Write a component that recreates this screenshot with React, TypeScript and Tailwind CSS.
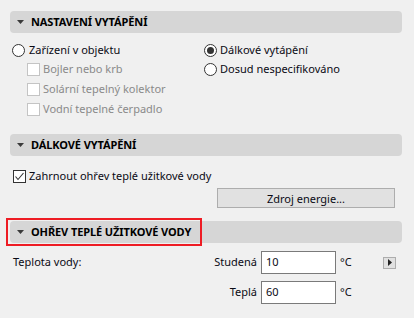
import React from "react";

const font = { fontFamily: '"Noto Sans", "Open Sans", sans-serif' };

function Header({ title }: { title: string }) {
  return (
    <div className="flex h-[22px] items-center rounded-[4px] bg-[#d6d6d6] pl-[7px]">
      <svg width="7" height="4" viewBox="0 0 7 4" className="mr-[7px]">
        <polygon points="0,0 7,0 3.5,4" fill="#3a3a3a" />
      </svg>
      <span className="text-[11px] font-bold tracking-[-0.1px] text-black">{title}</span>
    </div>
  );
}

function Radio({ checked }: { checked?: boolean }) {
  return (
    <span className="flex h-[13px] w-[13px] shrink-0 items-center justify-center rounded-full border border-[#333333] bg-white">
      {checked && <span className="h-[7px] w-[7px] rounded-full bg-[#333333]" />}
    </span>
  );
}

function Check({ checked, disabled }: { checked?: boolean; disabled?: boolean }) {
  return (
    <span
      className={
        "flex h-[13px] w-[13px] shrink-0 items-center justify-center border bg-white " +
        (disabled ? "border-[#c4c4c4]" : "border-[#333333]")
      }
    >
      {checked && (
        <svg width="11" height="11" viewBox="0 0 11 11">
          <polyline points="1.5,5.5 4,8.5 9.5,2" fill="none" stroke="#333" strokeWidth="1.1" />
        </svg>
      )}
    </span>
  );
}

export default function App() {
  return (
    <div style={font} className="relative h-[318px] w-[414px] bg-[#f0f0f0] pl-[10px] pr-[12px] pt-[11px] text-[11px] text-[#0a0a14]">
      <Header title="NASTAVENÍ VYTÁPĚNÍ" />
      <div className="mt-[8px] flex">
        <div className="w-[194px] pl-[2px]">
          <div className="flex h-[18px] items-center gap-[4px]">
            <Radio />
            <span>Zařízení v objektu</span>
          </div>
          {["Bojler nebo krb", "Solární tepelný kolektor", "Vodní tepelné čerpadlo"].map((t) => (
            <div key={t} className="flex h-[20px] items-center gap-[3px] pl-[15px] text-[#8a8a8a]">
              <Check disabled />
              <span>{t}</span>
            </div>
          ))}
        </div>
        <div>
          <div className="flex h-[18px] items-center gap-[3px]">
            <Radio checked />
            <span>Dálkové vytápění</span>
          </div>
          <div className="flex h-[20px] items-center gap-[3px]">
            <Radio />
            <span>Dosud nespecifikováno</span>
          </div>
        </div>
      </div>

      <div className="mt-[15px]">
        <Header title="DÁLKOVÉ VYTÁPĚNÍ" />
      </div>
      <div className="mt-[10px] flex h-[20px] items-center gap-[3px] pl-[3px]">
        <Check checked />
        <span>Zahrnout ohřev teplé užitkové vody</span>
      </div>
      <div className="mt-[2px] flex justify-end pr-[7px]">
        <button className="h-[20px] w-[178px] border border-[#adadad] bg-[#e1e1e1] text-[11px] leading-none text-[#0a0a14]">
          Zdroj energie...
        </button>
      </div>

      <div className="mt-[13px]">
        <Header title="OHŘEV TEPLÉ UŽITKOVÉ VODY" />
      </div>
      <div className="mt-[8px] flex h-[23px] items-center">
        <div className="flex w-[247px] items-center justify-between pl-[3px]">
          <span>Teplota vody:</span>
          <span>Studená</span>
        </div>
        <div className="ml-[4px] flex h-[23px] w-[75px] items-center border border-[#7a7a7a] bg-white pl-[4px]">10</div>
        <span className="ml-[4px]">°C</span>
        <div className="flex-1" />
        <div className="mr-[6px] flex h-[12px] w-[13px] items-center justify-center border border-[#adadad] bg-[#e1e1e1]">
          <svg width="4" height="7" viewBox="0 0 4 7">
            <polygon points="0,0 4,3.5 0,7" fill="#222" />
          </svg>
        </div>
      </div>
      <div className="mt-[7px] flex h-[23px] items-center">
        <div className="flex w-[247px] items-center justify-end">
          <span>Teplá</span>
        </div>
        <div className="ml-[4px] flex h-[23px] w-[75px] items-center border border-[#7a7a7a] bg-white pl-[4px]">60</div>
        <span className="ml-[4px]">°C</span>
      </div>

      <div className="pointer-events-none absolute left-[6px] top-[218px] h-[28px] w-[196px] border-2 border-[#ee1c24]" />
    </div>
  );
}
